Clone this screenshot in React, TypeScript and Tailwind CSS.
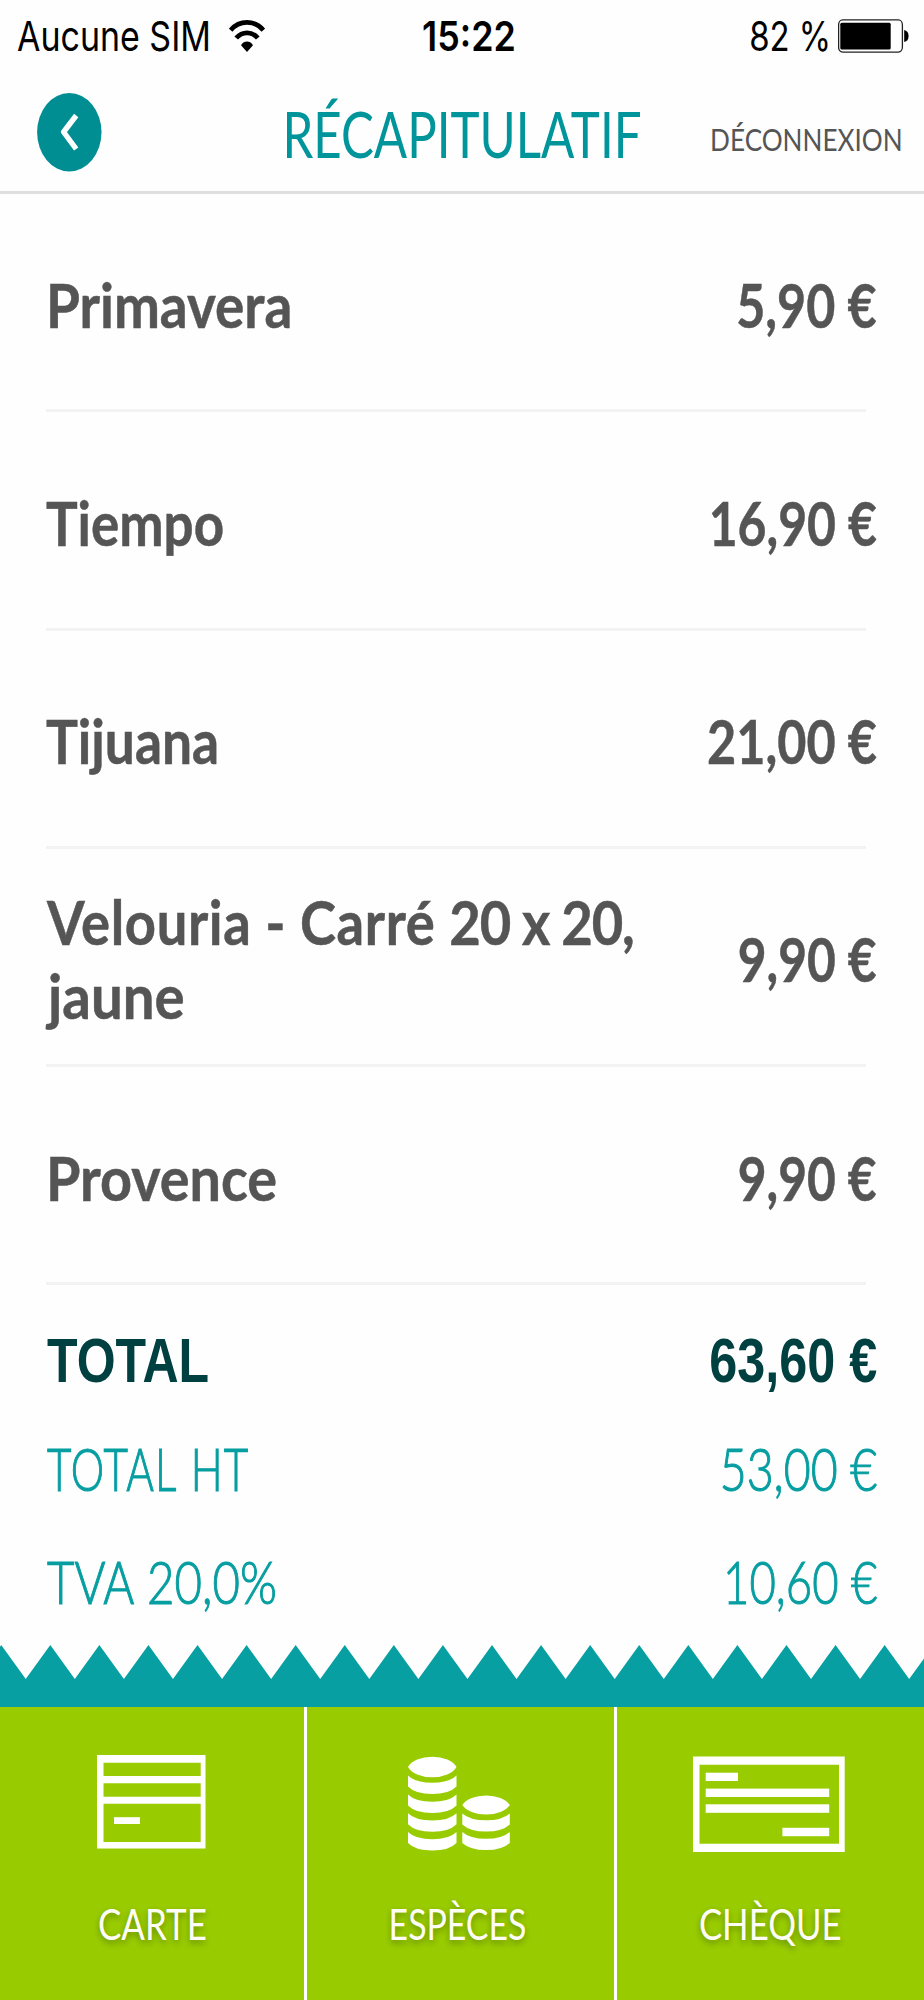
import React from "react";

type Part = { text: string; tracking: string };
type Line = { text: string; scale: string; parts?: Part[] };
type Item = { name: Line[]; price: Line };

const items: Item[] = [
  {
    name: [{ text: "Primavera", scale: "scale-x-[0.899]" }],
    price: { text: "5,90 €", scale: "scale-x-[0.823]" },
  },
  {
    name: [{ text: "Tiempo", scale: "scale-x-[0.868]" }],
    price: { text: "16,90 €", scale: "scale-x-[0.817]" },
  },
  {
    name: [{ text: "Tijuana", scale: "scale-x-[0.874]" }],
    price: { text: "21,00 €", scale: "scale-x-[0.825]" },
  },
  {
    name: [
      {
        text: "Velouria - Carré 20 x 20,",
        scale: "scale-x-[0.891] ml-[1px]",
        parts: [
          { text: "Velouria - Carré ", tracking: "tracking-[0.7px]" },
          { text: "20 x 20,", tracking: "tracking-[-1.3px]" },
        ],
      },
      { text: "jaune", scale: "scale-x-[0.925] ml-[2px]" },
    ],
    price: { text: "9,90 €", scale: "scale-x-[0.814]" },
  },
  {
    name: [{ text: "Provence", scale: "scale-x-[0.914]" }],
    price: { text: "9,90 €", scale: "scale-x-[0.814]" },
  },
];

function WifiIcon() {
  return (
    <svg className="h-[33px] w-[36px]" viewBox="0 0 36 33" fill="none" stroke="#000">
      <path d="M1.6 10.2C6 5 12 2.4 18 2.4S30 5 34.4 10.2" strokeWidth="4.8" />
      <path d="M7.2 18C10.2 14.6 14 12.8 18 12.8S25.8 14.6 28.8 18" strokeWidth="4.8" />
      <path d="M18 32L12 25.2C13.6 22.4 15.7 21.4 18 21.4S22.4 22.4 24 25.2Z" fill="#000" stroke="none" />
    </svg>
  );
}

function BatteryIcon() {
  return (
    <svg className="h-[34px] w-[71px]" viewBox="0 0 71 34">
      <rect x="0.6" y="0.9" width="63.8" height="32.2" rx="4" ry="5" fill="none" stroke="#222" strokeWidth="1.3" />
      <rect x="2.3" y="3.8" width="50.4" height="26.7" rx="1.5" fill="#000" />
      <path d="M66.2 11C69 11.5 70.6 13.5 70.6 17S69 22.5 66.2 23Z" fill="#000" />
    </svg>
  );
}

function StatusBar() {
  return (
    <div className="grid h-[72px] grid-cols-[415px_108px_401px] items-center whitespace-nowrap font-['Inter',sans-serif] text-[41px] leading-[50px] text-black">
      <div className="flex items-center pl-[17px]">
        <span className="w-[212px] origin-left scale-x-[0.828]">Aucune SIM</span>
        <WifiIcon />
      </div>
      <span className="origin-center scale-x-[0.874] text-center font-semibold">15:22</span>
      <div className="flex items-center justify-end gap-[7px] pr-[15px]">
        <span className="origin-right scale-x-[0.803]">82 %</span>
        <BatteryIcon />
      </div>
    </div>
  );
}

function NavBar() {
  return (
    <div className="grid h-[122px] grid-cols-[232px_460px_232px] items-center whitespace-nowrap border-b-[3px] border-[#dfdfdf]">
      <button className="ml-[37px] mt-[2px] h-[79px] w-[65px]" aria-label="Retour">
        <svg className="h-full w-full" viewBox="0 0 65 79">
          <ellipse cx="32.3" cy="39.3" rx="32.2" ry="39.2" fill="#008e92" />
          <path d="M39.2 22.5L26.6 39L39.2 56" fill="none" stroke="#fff" strokeWidth="5.4" strokeLinejoin="round" />
        </svg>
      </button>
      <h1 className="mt-[4px] origin-center scale-x-[0.781] text-center text-[63px] leading-[72px] text-[#00959a]">
        RÉCAPITULATIF
      </h1>
      <div className="mt-[15px] flex justify-end pr-[21px] text-[31px] leading-[40px] text-[#555]">
        <span className="origin-right scale-x-[0.842]">DÉCONNEXION</span>
      </div>
    </div>
  );
}

function ItemRow({ item }: { item: Item }) {
  return (
    <li className="flex h-[218.25px] flex-col">
      <div className="flex grow items-center justify-between whitespace-nowrap pl-[46px] pr-[47px] pt-[6px] text-[61px] font-bold leading-[74px] text-[#555] [-webkit-text-stroke:0.5px_#555]">
        <div className="flex flex-col items-start">
          {item.name.map((l) => (
            <span key={l.text} className={`origin-left whitespace-pre ${l.scale}`}>
              {l.parts
                ? l.parts.map((p) => (
                    <span key={p.text} className={p.tracking}>
                      {p.text}
                    </span>
                  ))
                : l.text}
            </span>
          ))}
        </div>
        <span className={`origin-right ${item.price.scale}`}>{item.price.text}</span>
      </div>
      <div className="ml-[46px] mr-[58px] h-[3px] shrink-0 bg-[#f3f3f3]" />
    </li>
  );
}

function Totals() {
  const light =
    "flex h-[112.5px] items-center justify-between font-light text-[58.5px] leading-[72px] text-[#079ea1] [-webkit-text-stroke:1.1px_#079ea1]";
  return (
    <div className="h-[360px] shrink-0 whitespace-nowrap pl-[47px] pr-[47px]">
      <div className="flex h-[127px] items-center justify-between pt-[22px] font-['Liberation_Sans',Arial,sans-serif] text-[63px] font-bold leading-[72px] text-[#004041]">
        <span className="origin-left scale-x-[0.794]">TOTAL</span>
        <span className="origin-right scale-x-[0.799]">63,60 €</span>
      </div>
      <div className={light}>
        <span className="origin-left scale-x-[0.722] tracking-[1.5px] [word-spacing:3px]">TOTAL HT</span>
        <span className="origin-right scale-x-[0.795]">53,00 €</span>
      </div>
      <div className={light}>
        <span className="origin-left scale-x-[0.81] [word-spacing:2px]">TVA 20,0%</span>
        <span className="origin-right scale-x-[0.778]">10,60 €</span>
      </div>
    </div>
  );
}

function Zigzag() {
  const step = 49.08;
  let d = "M-47.9 0";
  for (let i = 0; i < 20; i++) {
    const x = 1.2 + step * i;
    d += `L${x - step / 2} 34L${x} 0`;
  }
  return (
    <svg className="block h-[62px] w-full shrink-0" viewBox="0 0 924 62">
      <path d={d + "V62H-48Z"} fill="#089fa2" />
    </svg>
  );
}

function CardIcon() {
  return (
    <svg className="h-[97px] w-[109px]" viewBox="0 0 109 97" fill="#fff">
      <path
        fillRule="evenodd"
        d="M0 0H108.5V93.5H0ZM6.5 7.8V21H103.7V7.800ZM6.5 28.2V41.7H103.7V28.2ZM6.5 48.7V87H103.7V48.7Z"
      />
      <rect x="17" y="62.2" width="26" height="6.8" />
    </svg>
  );
}

function Coin({ x, y, w }: { x: number; y: number; w: number }) {
  return <path d={`M${x} ${y}A27 13 0 0 0 ${x + w} ${y}V${y + 11}A27 13.500 0 0 1 ${x} ${y + 11}Z`} />;
}

function CoinTop({ x, y, w }: { x: number; y: number; w: number }) {
  return <path d={`M${x} ${y}A25.500 15 0 0 1 ${x + w} ${y}A25.500 15 0 0 1 ${x} ${y}Z`} />;
}

function CoinsIcon() {
  return (
    <svg className="h-[97px] w-[102px]" viewBox="0 0 102 97" fill="#fff">
      <CoinTop x={0} y={12} w={48.5} />
      {[20.5, 39.5, 58.2, 77].map((y) => (
        <Coin key={y} x={0} y={y} w={48.5} />
      ))}
      <CoinTop x={54.3} y={50} w={47.5} />
      {[58.5, 77].map((y) => (
        <Coin key={y} x={54.3} y={y} w={47.5} />
      ))}
    </svg>
  );
}

function ChequeIcon() {
  return (
    <svg className="h-[97px] w-[152px]" viewBox="0 0 152 97" fill="#fff">
      <path fillRule="evenodd" d="M0 1.5H151.7V97H0ZM6.5 9.8V88.8H146V9.8Z" />
      <rect x="12.7" y="17.7" width="32.3" height="8.3" />
      <rect x="12.7" y="33.6" width="123.5" height="8.4" />
      <rect x="12.7" y="49.3" width="123.5" height="8.5" />
      <rect x="89.4" y="72.8" width="46.8" height="8.4" />
    </svg>
  );
}

const labelBase =
  "mt-[47px] origin-center whitespace-nowrap text-[42px] leading-[50px] text-[#fdfdf5] [text-shadow:0_3px_7px_rgba(40,60,0,0.45)]";

function PaymentBar() {
  return (
    <div className="grid h-[293px] shrink-0 grid-cols-[307px_310px_307px] bg-[#99cc00]">
      <button className="flex flex-col items-center justify-start border-r-[3px] border-white pt-[48px]">
        <span className="-ml-[2px] flex">
          <CardIcon />
        </span>
        <span className={`${labelBase} scale-x-[0.831]`}>CARTE</span>
      </button>
      <button className="flex flex-col items-center justify-start border-r-[3px] border-white pr-[3px] pt-[48px]">
        <span className="flex">
          <CoinsIcon />
        </span>
        <span className={`${labelBase} -ml-[4px] scale-x-[0.806]`}>ESPÈCES</span>
      </button>
      <button className="flex flex-col items-center justify-start pt-[48px]">
        <span className="-ml-[3px] flex">
          <ChequeIcon />
        </span>
        <span className={`${labelBase} scale-x-[0.827]`}>CHÈQUE</span>
      </button>
    </div>
  );
}

export default function App() {
  return (
    <main className="flex h-[2000px] w-[924px] flex-col overflow-hidden bg-[#fefefe] font-['Lato',sans-serif]">
      <StatusBar />
      <NavBar />
      <ul className="h-[1091px] shrink-0">
        {items.map((item) => (
          <ItemRow key={item.name[0].text} item={item} />
        ))}
      </ul>
      <Totals />
      <Zigzag />
      <PaymentBar />
    </main>
  );
}
